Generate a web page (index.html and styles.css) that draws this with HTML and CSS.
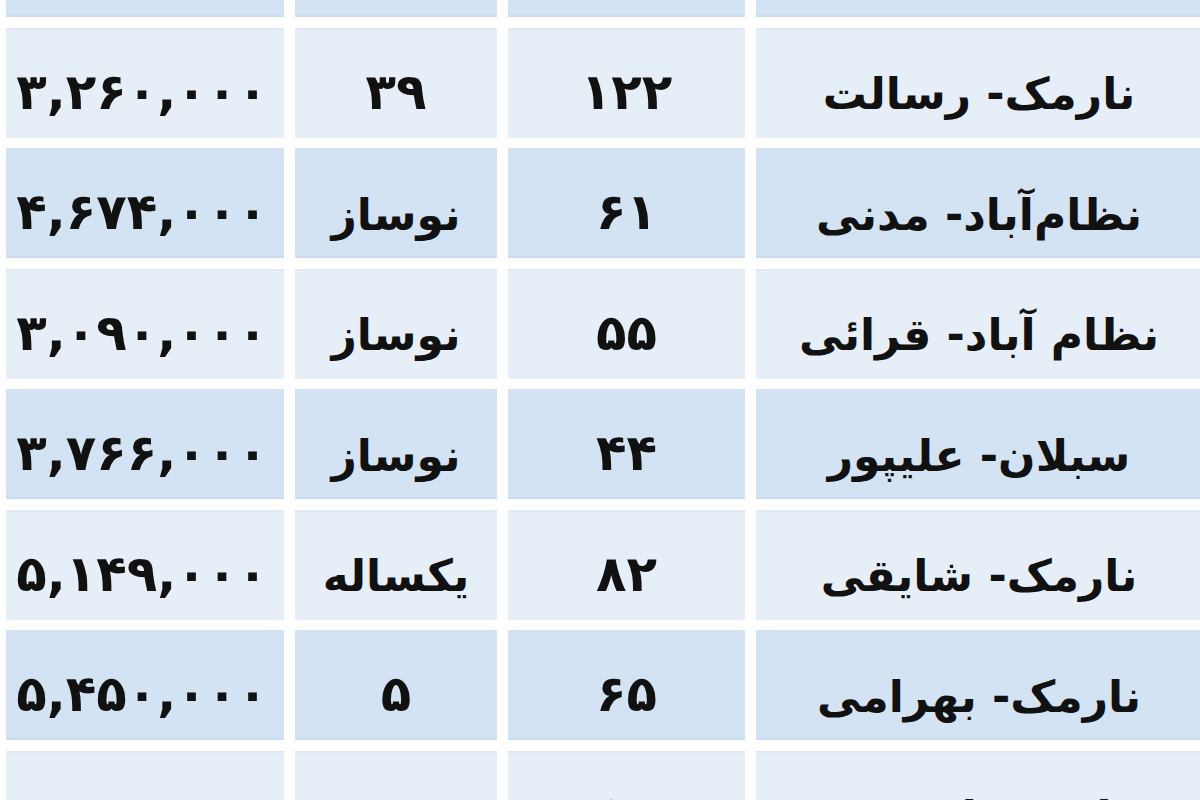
FILE: index.html
```html
<!DOCTYPE html>
<html lang="fa" dir="rtl">
<head>
<meta charset="utf-8">
<title>جدول قیمت</title>
<link rel="stylesheet" href="styles.css">
</head>
<body>
<div class="table">
  <div class="cell head blue"></div><div class="cell head blue"></div><div class="cell head blue"></div><div class="cell head blue"></div>

  <div class="cell c-name light">نارمک- رسالت</div><div class="cell c-area light">۱۲۲</div><div class="cell c-age light digits">۳۹</div><div class="cell c-price light"><span class="num">۳,۲۶۰,۰۰۰</span></div>

  <div class="cell c-name blue">نظام‌آباد- مدنی</div><div class="cell c-area blue">۶۱</div><div class="cell c-age blue">نوساز</div><div class="cell c-price blue"><span class="num">۴,۶۷۴,۰۰۰</span></div>

  <div class="cell c-name light">نظام آباد- قرائی</div><div class="cell c-area light">۵۵</div><div class="cell c-age light">نوساز</div><div class="cell c-price light"><span class="num">۳,۰۹۰,۰۰۰</span></div>

  <div class="cell c-name blue">سبلان- علیپور</div><div class="cell c-area blue">۴۴</div><div class="cell c-age blue">نوساز</div><div class="cell c-price blue"><span class="num">۳,۷۶۶,۰۰۰</span></div>

  <div class="cell c-name light">نارمک- شایقی</div><div class="cell c-area light">۸۲</div><div class="cell c-age light">یکساله</div><div class="cell c-price light"><span class="num">۵,۱۴۹,۰۰۰</span></div>

  <div class="cell c-name blue">نارمک- بهرامی</div><div class="cell c-area blue">۶۵</div><div class="cell c-age blue digits">۵</div><div class="cell c-price blue"><span class="num">۵,۴۵۰,۰۰۰</span></div>

  <div class="cell c-name light">سبلان- علیدوستی</div><div class="cell c-area light">۵۷</div><div class="cell c-age light digits">۲</div><div class="cell c-price light"><span class="num">۳,۲۰۸,۰۰۰</span></div>
</div>
</body>
</html>
```

FILE: styles.css
```css
html, body {
  margin: 0;
  padding: 0;
  background: #ffffff;
  overflow: hidden;
}

body {
  width: 1200px;
  height: 800px;
  font-family: "DejaVu Sans", sans-serif;
  font-weight: bold;
  color: #111111;
}

.table {
  display: grid;
  direction: rtl;
  grid-template-columns: 446px 237px 202px 278px;
  grid-template-rows: 17px repeat(7, 110px);
  column-gap: 11px;
  row-gap: 10.5px;
  width: 1196px;
  margin-right: -2px;
}

.cell {
  display: flex;
  align-items: center;
  justify-content: center;
  font-size: 44px;
  padding-top: 22px;
  box-sizing: border-box;
  white-space: nowrap;
  overflow: hidden;
}

.head {
  padding: 0;
  min-height: 0;
}

.c-area,
.c-price,
.digits {
  font-size: 50px;
  padding-top: 18px;
}

.light {
  background: #e6eef8;
  box-shadow: inset 0 2px 0 #dfe8f3;
}

.blue {
  background: #d3e3f3;
  box-shadow: inset 0 -2px 0 #c9dcf3;
}

.c-price {
  padding-right: 6px;
}

.num {
  direction: ltr;
  unicode-bidi: isolate;
  letter-spacing: 5px;
}
```
